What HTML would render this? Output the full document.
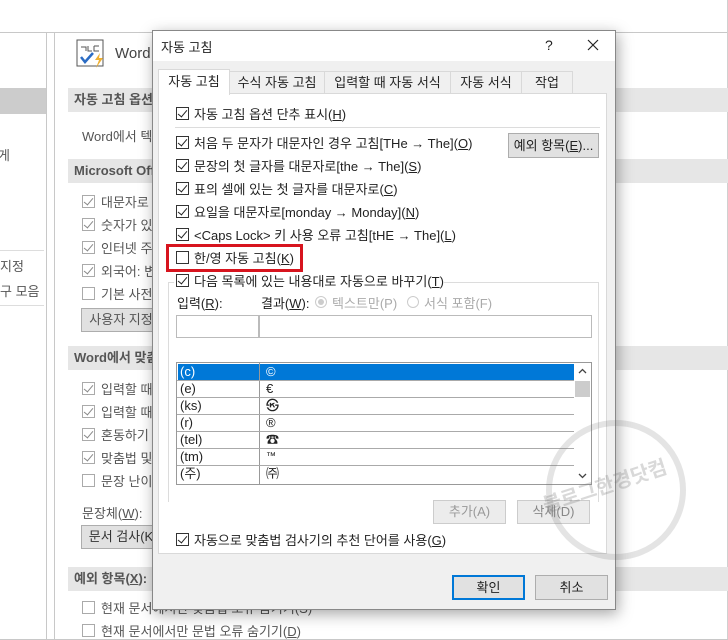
<!DOCTYPE html>
<html><head><meta charset="utf-8"><style>
*{box-sizing:border-box;margin:0;padding:0}
body{width:728px;height:640px;overflow:hidden;background:#fff;font-family:"Liberation Sans","Noto Sans CJK KR",sans-serif;font-size:13px;color:#222;position:relative}
.a{position:absolute;white-space:nowrap}
.hdr{position:absolute;background:#e6e6e6;color:#555;font-weight:bold;padding-left:6px;line-height:24px}
.cb{position:absolute;width:13px;height:13px;border:1px solid #333;background:#fff}
.cb.g{border-color:#aaa}
.cb.c::after{content:"";position:absolute;left:3px;top:0px;width:4px;height:8px;border:solid #222;border-width:0 1.5px 1.5px 0;transform:rotate(40deg)}
.cb.g.c::after{border-color:#888}
.btn{position:absolute;background:#e1e1e1;border:1px solid #adadad;text-align:center}
.gray{color:#555}
</style></head><body>
<div class="a" style="left:0;top:32px;width:728px;height:1px;background:#c8c8c8"></div>
<div class="a" style="left:727px;top:0;width:1px;height:640px;background:#d0d0d0"></div>
<div class="a" style="left:0;top:639px;width:728px;height:1px;background:#c8c8c8"></div>
<div class="a" style="left:46px;top:32px;width:1px;height:608px;background:#c8c8c8"></div>
<div class="a" style="left:54px;top:32px;width:1px;height:608px;background:#c8c8c8"></div>
<div class="a" style="left:0;top:88px;width:46px;height:26px;background:#ccc"></div>
<div class="a" style="left:0;top:250px;width:44px;height:1px;background:#ddd"></div>
<div class="a" style="left:0;top:305px;width:44px;height:1px;background:#ddd"></div>
<div class="a gray" style="left:-2px;top:145px">게</div>
<div class="a gray" style="left:0;top:256px">지정</div>
<div class="a gray" style="left:0;top:281px">구 모음</div>
<svg class="a" style="left:76px;top:39px" width="32" height="30"><rect x="1" y="1" width="26" height="26" fill="#fff" stroke="#555"/><path d="M5 8h5v4M12 7v5h4M18 7h5M18 7v5h5" stroke="#555" fill="none"/><path d="M5 18l4 5 8-9" stroke="#2b6cc4" stroke-width="2.5" fill="none"/><path d="M24 14l-5 7h4l-3 8 7-10h-4z" fill="#f0b030"/></svg>
<div class="a" style="left:115px;top:45px;font-size:15px;color:#444">Word</div>
<div class="hdr" style="left:68px;top:88px;width:660px">자동 고침 옵션</div>
<div class="a gray" style="left:82px;top:126px">Word에서 텍</div>
<div class="hdr" style="left:68px;top:159px;width:660px">Microsoft Office</div>
<div class="cb g c" style="left:82px;top:195px"></div><div class="a gray" style="left:101px;top:192px">대문자로</div>
<div class="cb g c" style="left:82px;top:218px"></div><div class="a gray" style="left:101px;top:215px">숫자가 있</div>
<div class="cb g c" style="left:82px;top:241px"></div><div class="a gray" style="left:101px;top:238px">인터넷 주</div>
<div class="cb g c" style="left:82px;top:264px"></div><div class="a gray" style="left:101px;top:261px">외국어: 변</div>
<div class="cb g" style="left:82px;top:287px"></div><div class="a gray" style="left:101px;top:284px">기본 사전</div>
<div class="btn gray" style="left:81px;top:308px;width:80px;height:24px;line-height:22px">사용자 지정</div>
<div class="hdr" style="left:68px;top:346px;width:660px">Word에서 맞춤</div>
<div class="cb g c" style="left:82px;top:382px"></div><div class="a gray" style="left:101px;top:379px">입력할 때</div>
<div class="cb g c" style="left:82px;top:405px"></div><div class="a gray" style="left:101px;top:402px">입력할 때</div>
<div class="cb g c" style="left:82px;top:428px"></div><div class="a gray" style="left:101px;top:425px">혼동하기</div>
<div class="cb g c" style="left:82px;top:451px"></div><div class="a gray" style="left:101px;top:448px">맞춤법 및</div>
<div class="cb g" style="left:82px;top:474px"></div><div class="a gray" style="left:101px;top:471px">문장 난이</div>
<div class="a gray" style="left:82px;top:503px">문장체(<u>W</u>):</div>
<div class="btn" style="left:81px;top:525px;width:80px;height:24px;line-height:22px;color:#333">문서 검사(K</div>
<div class="hdr" style="left:68px;top:567px;width:660px">예외 항목(<u>X</u>):</div>
<div class="cb g" style="left:82px;top:601px"></div><div class="a gray" style="left:101px;top:598px">현재 문서에서만 맞춤법 오류 숨기기(S)</div>
<div class="cb g" style="left:82px;top:624px"></div><div class="a gray" style="left:101px;top:621px">현재 문서에서만 문법 오류 숨기기(<u>D</u>)</div>

<div class="a" style="left:152px;top:30px;width:464px;height:580px;background:#f0f0f0;border:1px solid #888;box-shadow:2px 4px 14px rgba(0,0,0,.35)"></div>
<div class="a" style="left:153px;top:31px;width:462px;height:30px;background:#fff"></div>
<div class="a" style="left:161px;top:37px;font-size:13px">자동 고침</div>
<div class="a" style="left:545px;top:37px;font-size:14px">?</div>
<svg class="a" style="left:587px;top:39px" width="12" height="12"><path d="M1 1l10 10M11 1L1 11" stroke="#222" stroke-width="1.2"/></svg>
<div class="a" style="left:158px;top:93px;width:449px;height:461px;background:#fff;border:1px solid #d9d9d9"></div>
<div class="a" style="left:229px;top:71px;width:96px;height:23px;border:1px solid #d9d9d9;background:#f0f0f0;text-align:center;line-height:21px">수식 자동 고침</div>
<div class="a" style="left:324px;top:71px;width:127px;height:23px;border:1px solid #d9d9d9;background:#f0f0f0;text-align:center;line-height:21px">입력할 때 자동 서식</div>
<div class="a" style="left:450px;top:71px;width:72px;height:23px;border:1px solid #d9d9d9;background:#f0f0f0;text-align:center;line-height:21px">자동 서식</div>
<div class="a" style="left:521px;top:71px;width:52px;height:23px;border:1px solid #d9d9d9;background:#f0f0f0;text-align:center;line-height:21px">작업</div>
<div class="a" style="left:158px;top:69px;width:72px;height:26px;border:1px solid #d9d9d9;border-bottom:none;background:#fff;text-align:center;line-height:24px">자동 고침</div>

<div class="cb c" style="left:176px;top:107px"></div><div class="a" style="left:194px;top:104px">자동 고침 옵션 단추 표시(<u>H</u>)</div>
<div class="a" style="left:175px;top:127px;width:425px;height:1px;background:#dcdcdc"></div>
<div class="cb c" style="left:176px;top:136px"></div><div class="a" style="left:194px;top:133px">처음 두 문자가 대문자인 경우 고침[THe → The](<u>O</u>)</div>
<div class="btn" style="left:508px;top:133px;width:91px;height:25px;line-height:23px">예외 항목(<u>E</u>)...</div>
<div class="cb c" style="left:176px;top:159px"></div><div class="a" style="left:194px;top:156px">문장의 첫 글자를 대문자로[the → The](<u>S</u>)</div>
<div class="cb c" style="left:176px;top:182px"></div><div class="a" style="left:194px;top:179px">표의 셀에 있는 첫 글자를 대문자로(<u>C</u>)</div>
<div class="cb c" style="left:176px;top:205px"></div><div class="a" style="left:194px;top:202px">요일을 대문자로[monday → Monday](<u>N</u>)</div>
<div class="cb c" style="left:176px;top:228px"></div><div class="a" style="left:194px;top:225px">&lt;Caps Lock&gt; 키 사용 오류 고침[tHE → The](<u>L</u>)</div>
<div class="cb" style="left:176px;top:251px"></div><div class="a" style="left:194px;top:248px">한/영 자동 고침(<u>K</u>)</div>
<div class="a" style="left:166px;top:244px;width:137px;height:28px;border:3px solid #d7141e"></div>
<div class="a" style="left:168px;top:282px;width:431px;height:220px;border:1px solid #dcdcdc;border-bottom:none"></div>
<div class="a" style="left:174px;top:272px;width:270px;height:20px;background:#fff"></div>
<div class="cb c" style="left:176px;top:274px"></div><div class="a" style="left:194px;top:271px">다음 목록에 있는 내용대로 자동으로 바꾸기(<u>T</u>)</div>
<div class="a" style="left:177px;top:293px">입력(<u>R</u>):</div>
<div class="a" style="left:261px;top:293px">결과(<u>W</u>):</div>
<div class="a" style="left:315px;top:296px;width:12px;height:12px;border-radius:50%;border:1px solid #ccc;background:#fff"><div style="margin:2px;width:6px;height:6px;border-radius:50%;background:#ccc"></div></div>
<div class="a" style="left:332px;top:293px;color:#aaa">텍스트만(P)</div>
<div class="a" style="left:407px;top:296px;width:12px;height:12px;border-radius:50%;border:1px solid #ccc;background:#fff"></div>
<div class="a" style="left:424px;top:293px;color:#aaa">서식 포함(F)</div>
<div class="a" style="left:176px;top:315px;width:84px;height:23px;border:1px solid #bbb;border-right:2px solid #bbb"></div>
<div class="a" style="left:259px;top:315px;width:333px;height:23px;border:1px solid #bbb"></div>
<div class="a" style="left:176px;top:362px;width:416px;height:123px;border:1px solid #999;background:#fff;overflow:hidden">
<div style="position:absolute;left:1px;top:1px;width:396px;height:16px;background:#0078d7"></div>
<div style="position:absolute;left:82px;top:0;width:1px;height:123px;background:#999"></div>
<div style="position:absolute;left:0;top:17px;width:397px;height:1px;background:#aaa"></div>
<div style="position:absolute;left:0;top:34px;width:397px;height:1px;background:#aaa"></div>
<div style="position:absolute;left:0;top:51px;width:397px;height:1px;background:#aaa"></div>
<div style="position:absolute;left:0;top:68px;width:397px;height:1px;background:#aaa"></div>
<div style="position:absolute;left:0;top:85px;width:397px;height:1px;background:#aaa"></div>
<div style="position:absolute;left:0;top:102px;width:397px;height:1px;background:#aaa"></div>
<div style="position:absolute;left:397px;top:0;width:17px;height:123px;background:#fff"></div>
<div style="position:absolute;left:398px;top:18px;width:15px;height:16px;background:#ccc"></div>
<svg style="position:absolute;left:401px;top:5px" width="9" height="6"><path d="M1 5l3.5-3.5L8 5" stroke="#444" fill="none" stroke-width="1.3"/></svg>
<svg style="position:absolute;left:401px;top:110px" width="9" height="6"><path d="M1 1l3.5 3.5L8 1" stroke="#444" fill="none" stroke-width="1.3"/></svg>
<div style="position:absolute;left:3px;top:0;line-height:17px;color:#fff">(c)</div><div style="position:absolute;left:89px;top:0;line-height:17px;color:#fff">©</div>
<div style="position:absolute;left:3px;top:17px;line-height:17px">(e)</div><div style="position:absolute;left:89px;top:17px;line-height:17px">€</div>
<div style="position:absolute;left:3px;top:34px;line-height:17px">(ks)</div><div style="position:absolute;left:89px;top:34px;line-height:17px">㉿</div>
<div style="position:absolute;left:3px;top:51px;line-height:17px">(r)</div><div style="position:absolute;left:89px;top:51px;line-height:17px">®</div>
<div style="position:absolute;left:3px;top:68px;line-height:17px">(tel)</div><div style="position:absolute;left:89px;top:68px;line-height:17px">☎</div>
<div style="position:absolute;left:3px;top:85px;line-height:17px">(tm)</div><div style="position:absolute;left:89px;top:85px;line-height:17px;font-size:10px">™</div>
<div style="position:absolute;left:3px;top:102px;line-height:17px">(주)</div><div style="position:absolute;left:89px;top:102px;line-height:17px">㈜</div>
</div>
<div class="btn" style="left:433px;top:500px;width:73px;height:24px;line-height:22px;color:#999;background:#ececec;border-color:#ccc">추가(A)</div>
<div class="btn" style="left:517px;top:500px;width:73px;height:24px;line-height:22px;color:#888;background:#ececec;border-color:#ccc">삭제(D)</div>
<div class="cb c" style="left:176px;top:533px"></div><div class="a" style="left:194px;top:530px">자동으로 맞춤법 검사기의 추천 단어를 사용(<u>G</u>)</div>
<div class="btn" style="left:452px;top:575px;width:73px;height:25px;line-height:21px;border:2px solid #0078d7">확인</div>
<div class="btn" style="left:535px;top:575px;width:73px;height:25px;line-height:23px">취소</div>
<div class="a" style="left:546px;top:420px;width:140px;height:140px;border-radius:50%;border:6px solid rgba(120,120,120,.2)"></div>
<div class="a" style="left:540px;top:470px;font-size:20px;font-weight:bold;color:rgba(120,120,120,.28);transform:rotate(-18deg)">블로그한경닷컴</div>
</body></html>
